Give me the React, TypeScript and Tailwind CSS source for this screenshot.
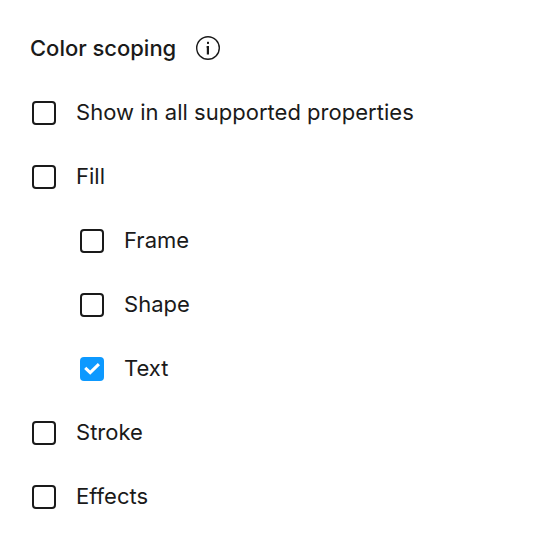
import { useState } from 'react';

type Option = {
  key: string;
  label: string;
  nested?: boolean;
};

const OPTIONS: Option[] = [
  { key: 'all', label: 'Show in all supported properties' },
  { key: 'fill', label: 'Fill' },
  { key: 'frame', label: 'Frame', nested: true },
  { key: 'shape', label: 'Shape', nested: true },
  { key: 'text', label: 'Text', nested: true },
  { key: 'stroke', label: 'Stroke' },
  { key: 'effects', label: 'Effects' },
];

function InfoIcon() {
  return (
    <svg className="w-6 h-6" viewBox="0 0 24 24" fill="none">
      <circle cx="12" cy="12" r="11.3" stroke="currentColor" strokeWidth="1.4" />
      <path d="M10.6 10H13V18.4H10.8V12H10.6Z" fill="currentColor" />
      <rect x="11" y="5.7" width="2" height="2.2" rx="0.4" fill="currentColor" />
    </svg>
  );
}

type CheckboxRowProps = {
  option: Option;
  checked: boolean;
  onToggle: () => void;
};

function CheckboxRow({ option, checked, onToggle }: CheckboxRowProps) {
  return (
    <label className={`flex h-16 items-center gap-5 ${option.nested ? 'pl-12' : ''}`}>
      <input type="checkbox" className="sr-only" checked={checked} onChange={onToggle} />
      <span
        className={`flex size-6 items-center justify-center rounded-[4px] ${
          checked ? 'bg-[#0d99ff] text-white' : 'border-2 border-[#1a1a1a]'
        }`}
      >
        {checked && (
          <svg className="size-6" viewBox="0 0 24 24" fill="none">
            <path d="M5.2 10.9L10.2 15.6L18.9 7.2" stroke="currentColor" strokeWidth="3.1" />
          </svg>
        )}
      </span>
      <span className="pb-px tracking-[0.02px]">{option.label}</span>
    </label>
  );
}

export default function App() {
  const [selected, setSelected] = useState<string[]>(['text']);

  const toggle = (key: string) => {
    setSelected((prev) => (prev.includes(key) ? prev.filter((k) => k !== key) : [...prev, key]));
  };

  return (
    <div className="h-screen w-full overflow-hidden bg-white px-8 pt-4 font-['Inter',sans-serif] text-[22px] text-[#1a1a1a]">
      <div className="-ml-0.5 mb-px flex h-16 items-center gap-5">
        <h2 className="font-medium tracking-[-0.02px]">Color scoping</h2>
        <InfoIcon />
      </div>
      {OPTIONS.map((option) => (
        <CheckboxRow
          key={option.key}
          option={option}
          checked={selected.includes(option.key)}
          onToggle={() => toggle(option.key)}
        />
      ))}
    </div>
  );
}
